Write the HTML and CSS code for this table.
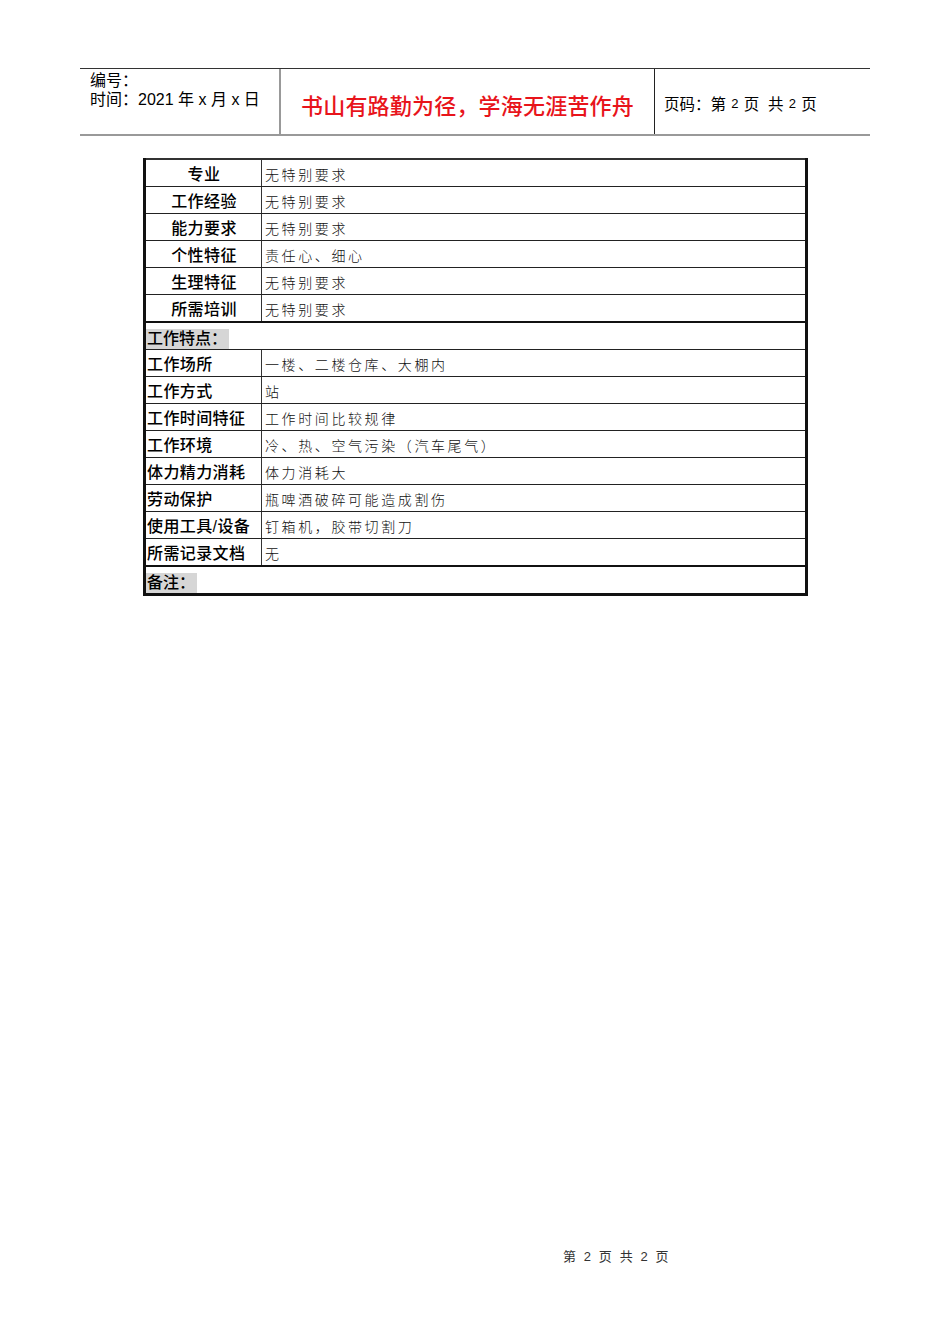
FILE: index.html
```html
<!DOCTYPE html>
<html lang="zh-CN">
<head>
<meta charset="utf-8">
<title>岗位说明书</title>
<link rel="stylesheet" href="styles.css">
</head>
<body>
<div class="page">
  <div class="header">
    <div class="hcell hleft">
      <div class="hline">编号：</div>
      <div class="hline">时间：2021 年 x 月 x 日</div>
    </div>
    <div class="hcell hmid">书山有路勤为径，学海无涯苦作舟</div>
    <div class="hcell hright">页码：第 <span class="num">2</span> 页&nbsp;&nbsp;共 <span class="num">2</span> 页</div>
  </div>

  <table class="sheet">
    <colgroup><col class="c1"><col class="c2"></colgroup>
    <tbody>
      <tr><td class="lab center">专业</td><td class="val">无特别要求</td></tr>
      <tr><td class="lab center">工作经验</td><td class="val">无特别要求</td></tr>
      <tr><td class="lab center">能力要求</td><td class="val">无特别要求</td></tr>
      <tr><td class="lab center">个性特征</td><td class="val">责任心、细心</td></tr>
      <tr><td class="lab center">生理特征</td><td class="val">无特别要求</td></tr>
      <tr class="thick"><td class="lab center">所需培训</td><td class="val">无特别要求</td></tr>
      <tr><td colspan="2" class="section"><span class="tag">工作特点：</span></td></tr>
      <tr><td class="lab">工作场所</td><td class="val">一楼、二楼仓库、大棚内</td></tr>
      <tr><td class="lab">工作方式</td><td class="val">站</td></tr>
      <tr><td class="lab">工作时间特征</td><td class="val">工作时间比较规律</td></tr>
      <tr><td class="lab">工作环境</td><td class="val">冷、热、空气污染（汽车尾气）</td></tr>
      <tr><td class="lab">体力精力消耗</td><td class="val">体力消耗大</td></tr>
      <tr><td class="lab">劳动保护</td><td class="val">瓶啤酒破碎可能造成割伤</td></tr>
      <tr><td class="lab">使用工具/设备</td><td class="val">钉箱机，胶带切割刀</td></tr>
      <tr class="thick"><td class="lab">所需记录文档</td><td class="val">无</td></tr>
      <tr><td colspan="2" class="section"><span class="tag">备注：</span></td></tr>
    </tbody>
  </table>

  <div class="footer">第 2 页 共 2 页</div>
</div>
</body>
</html>
```

FILE: styles.css
```css
html, body {
  margin: 0;
  padding: 0;
  background: #fff;
}
body {
  font-family: "Liberation Sans", "Noto Sans CJK SC", sans-serif;
  color: #000;
}
.page {
  width: 950px;
  height: 1344px;
  padding-top: 68px;
  box-sizing: border-box;
}
.header {
  margin-left: 80px;
  width: 790px;
  height: 68px;
  box-sizing: border-box;
  border-top: 1px solid #333;
  border-bottom: 2px solid #999;
  display: flex;
}
.hcell {
  box-sizing: border-box;
}
.hleft {
  width: 201px;
  border-right: 2px solid #999;
  padding: 2px 0 0 10px;
  font-size: 16px;
  line-height: 19px;
}
.hmid {
  width: 373px;
  display: flex;
  align-items: center;
  justify-content: center;
  padding-top: 4px;
  color: #e8141b;
  font-size: 22px;
  font-weight: 500;
  letter-spacing: 0.2px;
}
.hright {
  flex: 1;
  border-left: 1px solid #222;
  display: flex;
  align-items: center;
  padding: 3px 0 0 9px;
  font-size: 15.5px;
  white-space: pre;
}
.num {
  font-size: 13px;
  margin: 0 1px;
}
.sheet {
  margin-top: 22px;
  margin-left: 143px;
  width: 665px;
  border-collapse: collapse;
  table-layout: fixed;
  border-top: 2px solid #333;
  border-left: 3px solid #111;
  border-right: 3px solid #111;
  border-bottom: 3px solid #111;
}
.c1 { width: 117px; }
.c2 { width: auto; }
.sheet td {
  height: 26px;
  padding: 0;
  border-bottom: 1px solid #222;
  vertical-align: bottom;
  white-space: nowrap;
  overflow: hidden;
}
.sheet tr.thick td {
  border-bottom: 2px solid #111;
}
.lab {
  border-right: 1px solid #333;
  font-size: 16px;
  font-weight: 500;
  line-height: 22px;
  padding-left: 1px !important;
  letter-spacing: 0.4px;
}
.lab.center {
  text-align: center;
}
.val {
  font-size: 14px;
  font-weight: 300;
  line-height: 22px;
  letter-spacing: 2.6px;
  padding-left: 3px !important;
  color: #111;
}
.section {
  font-size: 16px;
  font-weight: 500;
  line-height: 22px;
}
.tag {
  display: inline-block;
  background: #d6d6d6;
  padding: 0 2px 0 1px;
  height: 20px;
  line-height: 20px;
  vertical-align: bottom;
}
.footer {
  margin-top: 652px;
  padding-left: 563px;
  font-size: 13px;
  color: #333;
  letter-spacing: 1.6px;
  word-spacing: 1px;
  line-height: 18px;
}
```
